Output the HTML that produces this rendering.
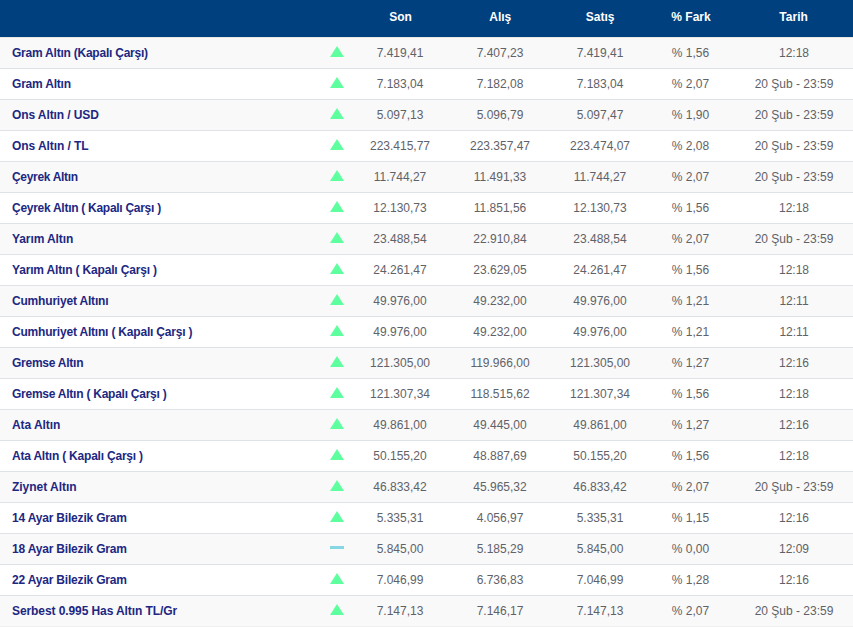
<!DOCTYPE html>
<html><head><meta charset="utf-8"><style>
html,body{margin:0;padding:0;width:853px;height:627px;overflow:hidden;background:#fff;}
body{position:relative;font-family:"Liberation Sans",sans-serif;}
.hd{position:absolute;left:0;top:0;width:853px;height:37px;background:#01407e;}
.hd div{position:absolute;top:0;height:34px;line-height:34px;color:#fff;font-weight:bold;font-size:12px;text-align:center;letter-spacing:0px;white-space:nowrap;}
.r{position:absolute;left:0;width:853px;height:30px;border-bottom:1px solid #dfe2e6;}
.r.o{background:#f9f9f9;}
.r div{position:absolute;top:0;height:30px;line-height:30px;white-space:nowrap;}
.r .n{left:12px;color:#212781;font-weight:bold;font-size:12px;letter-spacing:-0.25px;}
.r .v{color:#5f6268;font-size:12px;text-align:center;letter-spacing:0px;}
.up{position:absolute;left:330px;top:8px;width:0;height:0;border-left:7px solid transparent;border-right:7px solid transparent;border-bottom:11px solid #5eff9e;}
.eq{position:absolute;left:330px;top:12px;width:14px;height:3px;background:#85d8e3;}
</style></head><body>

<div class="hd">
<div class="h" style="left:350.5px;width:100px">Son</div>
<div class="h" style="left:450.3px;width:100px">Alış</div>
<div class="h" style="left:550.2px;width:100px">Satış</div>
<div class="h" style="left:641.0px;width:100px">% Fark</div>
<div class="h" style="left:743.6px;width:100px">Tarih</div>
</div>
<div style="position:absolute;left:0;top:37px;width:853px;height:1px;background:#e8e7e4"></div>
<div class="r o" style="top:38px">
<div class="n" style="letter-spacing:-0.229px">Gram Altın (Kapalı Çarşı)</div>
<i class="up"></i>
<div class="v" style="left:340.0px;width:120px">7.419,41</div>
<div class="v" style="left:440.0px;width:120px">7.407,23</div>
<div class="v" style="left:540.0px;width:120px">7.419,41</div>
<div class="v" style="left:630.5px;width:120px">% 1,56</div>
<div class="v" style="left:734.0px;width:120px">12:18</div>
</div>
<div class="r" style="top:69px">
<div class="n" style="letter-spacing:-0.206px">Gram Altın</div>
<i class="up"></i>
<div class="v" style="left:340.0px;width:120px">7.183,04</div>
<div class="v" style="left:440.0px;width:120px">7.182,08</div>
<div class="v" style="left:540.0px;width:120px">7.183,04</div>
<div class="v" style="left:630.5px;width:120px">% 2,07</div>
<div class="v" style="left:734.0px;width:120px">20 Şub - 23:59</div>
</div>
<div class="r o" style="top:100px">
<div class="n" style="letter-spacing:-0.100px">Ons Altın / USD</div>
<i class="up"></i>
<div class="v" style="left:340.0px;width:120px">5.097,13</div>
<div class="v" style="left:440.0px;width:120px">5.096,79</div>
<div class="v" style="left:540.0px;width:120px">5.097,47</div>
<div class="v" style="left:630.5px;width:120px">% 1,90</div>
<div class="v" style="left:734.0px;width:120px">20 Şub - 23:59</div>
</div>
<div class="r" style="top:131px">
<div class="n" style="letter-spacing:-0.081px">Ons Altın / TL</div>
<i class="up"></i>
<div class="v" style="left:340.0px;width:120px">223.415,77</div>
<div class="v" style="left:440.0px;width:120px">223.357,47</div>
<div class="v" style="left:540.0px;width:120px">223.474,07</div>
<div class="v" style="left:630.5px;width:120px">% 2,08</div>
<div class="v" style="left:734.0px;width:120px">20 Şub - 23:59</div>
</div>
<div class="r o" style="top:162px">
<div class="n" style="letter-spacing:-0.314px">Çeyrek Altın</div>
<i class="up"></i>
<div class="v" style="left:340.0px;width:120px">11.744,27</div>
<div class="v" style="left:440.0px;width:120px">11.491,33</div>
<div class="v" style="left:540.0px;width:120px">11.744,27</div>
<div class="v" style="left:630.5px;width:120px">% 2,07</div>
<div class="v" style="left:734.0px;width:120px">20 Şub - 23:59</div>
</div>
<div class="r" style="top:193px">
<div class="n" style="letter-spacing:-0.279px">Çeyrek Altın ( Kapalı Çarşı )</div>
<i class="up"></i>
<div class="v" style="left:340.0px;width:120px">12.130,73</div>
<div class="v" style="left:440.0px;width:120px">11.851,56</div>
<div class="v" style="left:540.0px;width:120px">12.130,73</div>
<div class="v" style="left:630.5px;width:120px">% 1,56</div>
<div class="v" style="left:734.0px;width:120px">12:18</div>
</div>
<div class="r o" style="top:224px">
<div class="n" style="letter-spacing:-0.090px">Yarım Altın</div>
<i class="up"></i>
<div class="v" style="left:340.0px;width:120px">23.488,54</div>
<div class="v" style="left:440.0px;width:120px">22.910,84</div>
<div class="v" style="left:540.0px;width:120px">23.488,54</div>
<div class="v" style="left:630.5px;width:120px">% 2,07</div>
<div class="v" style="left:734.0px;width:120px">20 Şub - 23:59</div>
</div>
<div class="r" style="top:255px">
<div class="n" style="letter-spacing:-0.169px">Yarım Altın ( Kapalı Çarşı )</div>
<i class="up"></i>
<div class="v" style="left:340.0px;width:120px">24.261,47</div>
<div class="v" style="left:440.0px;width:120px">23.629,05</div>
<div class="v" style="left:540.0px;width:120px">24.261,47</div>
<div class="v" style="left:630.5px;width:120px">% 1,56</div>
<div class="v" style="left:734.0px;width:120px">12:18</div>
</div>
<div class="r o" style="top:286px">
<div class="n" style="letter-spacing:-0.188px">Cumhuriyet Altını</div>
<i class="up"></i>
<div class="v" style="left:340.0px;width:120px">49.976,00</div>
<div class="v" style="left:440.0px;width:120px">49.232,00</div>
<div class="v" style="left:540.0px;width:120px">49.976,00</div>
<div class="v" style="left:630.5px;width:120px">% 1,21</div>
<div class="v" style="left:734.0px;width:120px">12:11</div>
</div>
<div class="r" style="top:317px">
<div class="n" style="letter-spacing:-0.195px">Cumhuriyet Altını ( Kapalı Çarşı )</div>
<i class="up"></i>
<div class="v" style="left:340.0px;width:120px">49.976,00</div>
<div class="v" style="left:440.0px;width:120px">49.232,00</div>
<div class="v" style="left:540.0px;width:120px">49.976,00</div>
<div class="v" style="left:630.5px;width:120px">% 1,21</div>
<div class="v" style="left:734.0px;width:120px">12:11</div>
</div>
<div class="r o" style="top:348px">
<div class="n" style="letter-spacing:-0.250px">Gremse Altın</div>
<i class="up"></i>
<div class="v" style="left:340.0px;width:120px">121.305,00</div>
<div class="v" style="left:440.0px;width:120px">119.966,00</div>
<div class="v" style="left:540.0px;width:120px">121.305,00</div>
<div class="v" style="left:630.5px;width:120px">% 1,27</div>
<div class="v" style="left:734.0px;width:120px">12:16</div>
</div>
<div class="r" style="top:379px">
<div class="n" style="letter-spacing:-0.246px">Gremse Altın ( Kapalı Çarşı )</div>
<i class="up"></i>
<div class="v" style="left:340.0px;width:120px">121.307,34</div>
<div class="v" style="left:440.0px;width:120px">118.515,62</div>
<div class="v" style="left:540.0px;width:120px">121.307,34</div>
<div class="v" style="left:630.5px;width:120px">% 1,56</div>
<div class="v" style="left:734.0px;width:120px">12:18</div>
</div>
<div class="r o" style="top:410px">
<div class="n" style="letter-spacing:-0.062px">Ata Altın</div>
<i class="up"></i>
<div class="v" style="left:340.0px;width:120px">49.861,00</div>
<div class="v" style="left:440.0px;width:120px">49.445,00</div>
<div class="v" style="left:540.0px;width:120px">49.861,00</div>
<div class="v" style="left:630.5px;width:120px">% 1,27</div>
<div class="v" style="left:734.0px;width:120px">12:16</div>
</div>
<div class="r" style="top:441px">
<div class="n" style="letter-spacing:-0.206px">Ata Altın ( Kapalı Çarşı )</div>
<i class="up"></i>
<div class="v" style="left:340.0px;width:120px">50.155,20</div>
<div class="v" style="left:440.0px;width:120px">48.887,69</div>
<div class="v" style="left:540.0px;width:120px">50.155,20</div>
<div class="v" style="left:630.5px;width:120px">% 1,56</div>
<div class="v" style="left:734.0px;width:120px">12:18</div>
</div>
<div class="r o" style="top:472px">
<div class="n" style="letter-spacing:-0.032px">Ziynet Altın</div>
<i class="up"></i>
<div class="v" style="left:340.0px;width:120px">46.833,42</div>
<div class="v" style="left:440.0px;width:120px">45.965,32</div>
<div class="v" style="left:540.0px;width:120px">46.833,42</div>
<div class="v" style="left:630.5px;width:120px">% 2,07</div>
<div class="v" style="left:734.0px;width:120px">20 Şub - 23:59</div>
</div>
<div class="r" style="top:503px">
<div class="n" style="letter-spacing:-0.187px">14 Ayar Bilezik Gram</div>
<i class="up"></i>
<div class="v" style="left:340.0px;width:120px">5.335,31</div>
<div class="v" style="left:440.0px;width:120px">4.056,97</div>
<div class="v" style="left:540.0px;width:120px">5.335,31</div>
<div class="v" style="left:630.5px;width:120px">% 1,15</div>
<div class="v" style="left:734.0px;width:120px">12:16</div>
</div>
<div class="r o" style="top:534px">
<div class="n" style="letter-spacing:-0.187px">18 Ayar Bilezik Gram</div>
<i class="eq"></i>
<div class="v" style="left:340.0px;width:120px">5.845,00</div>
<div class="v" style="left:440.0px;width:120px">5.185,29</div>
<div class="v" style="left:540.0px;width:120px">5.845,00</div>
<div class="v" style="left:630.5px;width:120px">% 0,00</div>
<div class="v" style="left:734.0px;width:120px">12:09</div>
</div>
<div class="r" style="top:565px">
<div class="n" style="letter-spacing:-0.187px">22 Ayar Bilezik Gram</div>
<i class="up"></i>
<div class="v" style="left:340.0px;width:120px">7.046,99</div>
<div class="v" style="left:440.0px;width:120px">6.736,83</div>
<div class="v" style="left:540.0px;width:120px">7.046,99</div>
<div class="v" style="left:630.5px;width:120px">% 1,28</div>
<div class="v" style="left:734.0px;width:120px">12:16</div>
</div>
<div class="r o" style="top:596px;border-bottom-color:#eff0f1">
<div class="n" style="letter-spacing:-0.089px">Serbest 0.995 Has Altın TL/Gr</div>
<i class="up"></i>
<div class="v" style="left:340.0px;width:120px">7.147,13</div>
<div class="v" style="left:440.0px;width:120px">7.146,17</div>
<div class="v" style="left:540.0px;width:120px">7.147,13</div>
<div class="v" style="left:630.5px;width:120px">% 2,07</div>
<div class="v" style="left:734.0px;width:120px">20 Şub - 23:59</div>
</div>
</body></html>
